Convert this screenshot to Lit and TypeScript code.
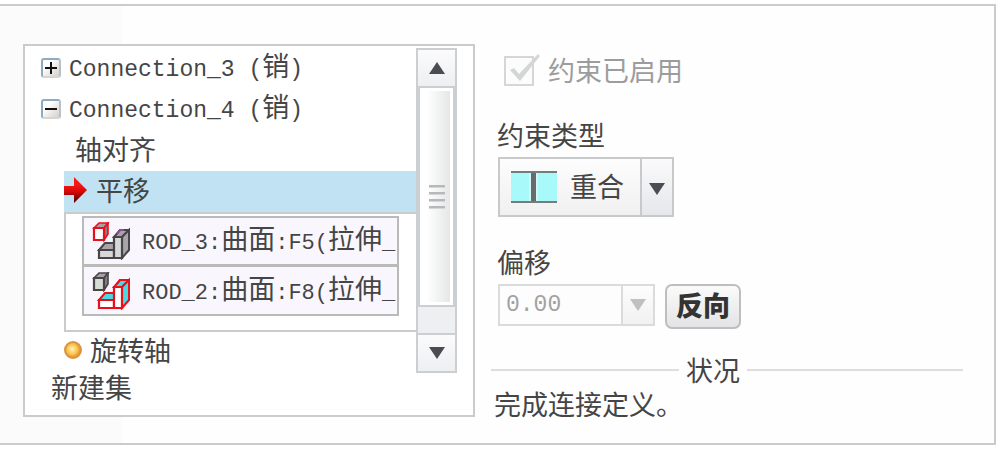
import { LitElement, html, css, svg } from "lit";
import { customElement, property, state } from "lit/decorators.js";

const textStyles = css`
  * {
    box-sizing: border-box;
  }
  .mono {
    font-family: "Liberation Mono", monospace;
    font-size: 23px;
    white-space: pre;
  }
`;

/** Sets Latin runs in the monospaced face and leaves Chinese in the UI face. */
const mixed = (text: string) =>
  text
    .split(/([\x20-\x7e]+)/)
    .filter((part) => part)
    .map((part) =>
      /^[\x20-\x7e]/.test(part) ? html`<span class="mono">${part}</span>` : part
    );

const partIcon = (active: "cube" | "step") => {
  const red = "#e8101c";
  const grey = "#484448";
  const cube = active === "cube" ? red : grey;
  const step = active === "step" ? red : grey;
  const cubeFace = active === "cube" ? "#fff" : "#d4dcd4";
  const stepFace = active === "step" ? "#fff" : "#d8d8d8";
  const stepSide = active === "step" ? "#4cd8e0" : "#a8a4a8";
  return html`<svg class="part" width="38" height="38" viewBox="0 0 38 38" aria-hidden="true">
    ${svg`
      <path d="M2 6 L7 1 H16 L12 6 Z" fill="#a8a0a4" stroke=${cube} stroke-width="1.6"/>
      <path d="M12 6 L16 1 V12 L12 18 Z" fill="#8c7c84" stroke=${cube} stroke-width="1.6"/>
      <path d="M2 6 H12 V18 H2 Z" fill=${cubeFace} stroke=${cube} stroke-width="2.2"/>
      <path d="M7 28 L13 21 H23 V28 Z" fill=${stepSide} stroke=${step} stroke-width="2"/>
      <path d="M22 15 L28 8 H37 L30 15 Z" fill=${stepSide} stroke=${step} stroke-width="2"/>
      <path d="M30 15 L37 8 V28 L30 36 Z" fill=${stepSide} stroke=${step} stroke-width="2"/>
      <path d="M7 28 H22 V36 H7 Z" fill=${stepFace} stroke=${step} stroke-width="2.2"/>
      <path d="M22 15 H30 V36 H22 Z" fill=${stepFace} stroke=${step} stroke-width="2.2"/>
      <path d="M25 12 L28 8 H32" fill="none" stroke=${active === "cube" ? "#8c4c9c" : red} stroke-width="2"/>
    `}
  </svg>`;
};

@customElement("tree-toggle")
export class TreeToggle extends LitElement {
  @property({ type: Boolean }) open = false;
  @property() label = "";

  static styles = css`
    :host {
      display: flex;
    }
    .toggle {
      display: flex;
      align-items: center;
      justify-content: center;
      width: 20px;
      height: 20px;
      padding: 0;
      border: 2px solid #b8c0c8;
      border-top-color: #8cacc4;
      border-left-color: #8cacc4;
      border-bottom-color: #d8d4d0;
      border-radius: 3px;
      background: linear-gradient(135deg, #ffffff 30%, #d4d0cc);
    }
  `;

  render() {
    return html`<button class="toggle" aria-label=${this.label} aria-expanded=${this.open}>
      <svg width="12" height="12" viewBox="0 0 12 12" aria-hidden="true">
        <path d=${this.open ? "M0 6H12" : "M0 6H12M6 0V12"} stroke="#111" stroke-width="2" />
      </svg>
    </button>`;
  }
}

@customElement("scroll-rail")
export class ScrollRail extends LitElement {
  static styles = css`
    * {
      box-sizing: border-box;
    }
    :host {
      display: flex;
      flex-direction: column;
      border: 2px solid #cccfd2;
      background: #eeeff1;
    }
    .step {
      display: flex;
      align-items: center;
      justify-content: center;
      height: 36px;
      padding: 0;
      border: 0;
      background: linear-gradient(#fbfbfc, #eeeff1);
    }
    .rail {
      flex: 1;
      display: flex;
      flex-direction: column;
      border-top: 2px solid #cccfd2;
      border-bottom: 2px solid #cccfd2;
      padding-bottom: 26px;
    }
    .thumb {
      flex: 1;
      display: flex;
      flex-direction: column;
      align-items: center;
      justify-content: center;
      gap: 4px;
      border: 2px solid #cccfd2;
      border-top: 0;
      box-shadow: inset 0 0 0 3px #fff;
      background: linear-gradient(90deg, #ffffff 20%, #e2e3e3);
    }
    .grip {
      width: 16px;
      height: 3px;
      border-bottom: 1px solid #d4d6d7;
      background: #b6b8b9;
    }
  `;

  render() {
    return html`
      <button class="step" aria-label="向上滚动">
        <svg width="18" height="12" viewBox="0 0 18 12"><path d="M9 0L17 12H1Z" fill="#4c4c50" /></svg>
      </button>
      <div class="rail">
        <div class="thumb">${[0, 1, 2, 3].map(() => html`<span class="grip"></span>`)}</div>
      </div>
      <button class="step" aria-label="向下滚动">
        <svg width="18" height="12" viewBox="0 0 18 12"><path d="M1 0H17L9 12Z" fill="#4c4c50" /></svg>
      </button>
    `;
  }
}

@customElement("connection-tree")
export class ConnectionTree extends LitElement {
  @state() private references = [
    { icon: "cube" as const, text: "ROD_3:曲面:F5(拉伸_" },
    { icon: "step" as const, text: "ROD_2:曲面:F8(拉伸_" },
  ];

  static styles = [
    textStyles,
    css`
      :host {
        display: grid;
        grid-template-columns: minmax(0, 1fr) 41px;
        padding: 2px 16px 9px 0;
        border: 2px solid #cbcbcb;
        background: #fff;
      }
      .tree,
      .set {
        margin: 0;
        padding: 0;
        list-style: none;
      }
      .row {
        display: flex;
        align-items: center;
        height: 41px;
        padding-bottom: 4px;
        white-space: nowrap;
      }
      .group {
        gap: 8px;
        padding-bottom: 2px;
        padding-left: 16px;
      }
      .child {
        padding-left: 50px;
      }
      .selected {
        gap: 8px;
        margin-left: 39px;
        background: #c1e2f2;
      }
      .short {
        height: 37px;
        padding-bottom: 2px;
      }
      .axis {
        gap: 8px;
        padding-left: 39px;
      }
      .new {
        padding-left: 26px;
      }
      .references {
        height: 120px;
        margin: 0 0 0 39px;
        padding: 2px 17px 0 16px;
        border: 2px solid #cbcbcb;
        border-right: 0;
        list-style: none;
      }
      .reference {
        display: flex;
        align-items: center;
        gap: 12px;
        height: 50px;
        padding-left: 8px;
        border: 2px solid #b9bbb9;
        background: #f9f7fd;
      }
      .reference + .reference {
        border-top-width: 1px;
      }
      .part {
        flex: none;
      }
      .name {
        white-space: nowrap;
      }
      .name .mono {
        font-size: 22px;
      }
      .rail {
        margin-bottom: 33px;
      }
    `,
  ];

  render() {
    return html`
      <ul class="tree">
        <li class="row group"><tree-toggle label="展开"></tree-toggle><span>${mixed("Connection_3 (销)")}</span></li>
        <li>
          <div class="row group"><tree-toggle open label="折叠"></tree-toggle><span>${mixed("Connection_4 (销)")}</span></div>
          <ul class="set">
            <li class="row child">轴对齐</li>
            <li>
              <div class="row selected">
                <svg width="24" height="28" viewBox="0 0 24 28" aria-hidden="true">
                  <defs>
                    <linearGradient id="arrow" x2="0" y2="1">
                      <stop offset="0.3" stop-color="#f41818" />
                      <stop offset="0.55" stop-color="#d80808" />
                      <stop offset="1" stop-color="#4c0000" />
                    </linearGradient>
                  </defs>
                  <path d="M0 10H10V1L23 14L10 27V19H0Z" fill="url(#arrow)" />
                </svg>
                <span>平移</span>
              </div>
              <ul class="references">
                ${this.references.map(
                  (item) => html`<li class="reference">${partIcon(item.icon)}<span class="name">${mixed(item.text)}</span></li>`
                )}
              </ul>
            </li>
            <li class="row short axis">
              <svg width="18" height="20" viewBox="0 0 18 20" aria-hidden="true">
                <defs>
                  <radialGradient id="dot" cx="0.45" cy="0.45">
                    <stop offset="0" stop-color="#fff4b8" />
                    <stop offset="0.6" stop-color="#fcc850" />
                    <stop offset="1" stop-color="#e89434" />
                  </radialGradient>
                </defs>
                <circle cx="9" cy="10" r="8" fill="url(#dot)" stroke="#dc9444" stroke-width="2" />
              </svg>
              <span>旋转轴</span>
            </li>
          </ul>
        </li>
        <li class="row short new">新建集</li>
      </ul>
      <scroll-rail class="rail"></scroll-rail>
    `;
  }
}

@customElement("constraint-form")
export class ConstraintForm extends LitElement {
  static styles = [
    textStyles,
    css`
      :host {
        display: flex;
        flex-direction: column;
      }
      .enabled {
        display: flex;
        align-items: center;
        gap: 8px;
        height: 40px;
        margin: 6px 0 0 13px;
        color: #9c9c9c;
      }
      .check {
        display: grid;
        width: 36px;
        height: 32px;
      }
      .check > * {
        grid-area: 1 / 1;
      }
      .box {
        appearance: none;
        width: 30px;
        height: 30px;
        margin: 2px 0 0;
        border: 2px solid #d5d7d5;
        background: #fcfcfc;
      }
      .tick,
      .glyph,
      .caret {
        pointer-events: none;
      }
      .caption {
        align-self: flex-start;
        height: 40px;
        margin: 26px 0 0 6px;
        line-height: 38px;
      }
      .type {
        display: grid;
        grid-template-columns: 142px 34px;
        align-items: center;
        width: 176px;
        height: 60px;
        margin: 1px 0 0 7px;
      }
      .type > * {
        grid-row: 1;
      }
      .select {
        grid-column: 1 / 3;
        appearance: none;
        width: 100%;
        height: 100%;
        padding: 0 0 3px 70px;
        border: 2px solid #c7c9cb;
        border-radius: 0;
        background:
          linear-gradient(#c7c9cb, #c7c9cb) 140px 0 / 2px 100% no-repeat,
          linear-gradient(#fafafb, #e6e7eb) 142px 0 / 40px 100% no-repeat,
          linear-gradient(#fdfdfd, #f0f0f1);
        color: inherit;
        font: inherit;
      }
      .glyph {
        grid-column: 1;
        margin-left: 13px;
      }
      .caret {
        grid-column: 2;
        justify-self: center;
      }
      .offset {
        display: flex;
        gap: 10px;
        margin: 1px 0 0 7px;
      }
      .combo {
        display: flex;
        width: 157px;
        height: 42px;
        border: 2px solid #dadbdc;
      }
      .value {
        flex: 1;
        min-width: 0;
        padding: 0 0 0 6px;
        border: 0;
        background: #fdfdfd;
        color: #a2a2a2;
      }
      .drop {
        display: flex;
        align-items: center;
        justify-content: center;
        width: 32px;
        padding: 0;
        border: 0;
        border-left: 2px solid #dadbdc;
        background: linear-gradient(#fdfdfd, #f1f1f2);
      }
      .flip {
        width: 76px;
        height: 45px;
        padding: 0 0 4px;
        border: 2px solid #bcbec0;
        border-radius: 7px;
        background: linear-gradient(#fbfbfb, #e4e4e6);
        color: #333;
        font: inherit;
        font-weight: 900;
        line-height: 36px;
      }
      .status {
        display: flex;
        align-items: center;
        gap: 7px;
        height: 34px;
        margin-top: 24px;
      }
      .status::before,
      .status::after {
        content: "";
        height: 2px;
        background: #dedede;
      }
      .status::before {
        flex: 188;
      }
      .status::after {
        flex: 216;
      }
      .title {
        margin: 0;
        font: inherit;
      }
      .message {
        margin: 0 0 0 3px;
        line-height: 34px;
      }
    `,
  ];

  render() {
    return html`
      <label class="enabled">
        <span class="check">
          <input class="box" type="checkbox" checked disabled />
          <svg class="tick" width="36" height="32" viewBox="0 0 36 32" aria-hidden="true">
            <path d="M6 16L10 14L15 20L34 0L36 2L16 27Z" fill="#d3d7d4" />
          </svg>
        </span>
        <span>约束已启用</span>
      </label>

      <label class="caption" for="type">约束类型</label>
      <div class="type">
        <select class="select" id="type">
          <option>重合</option>
        </select>
        <svg class="glyph" width="46" height="34" viewBox="0 0 46 34" aria-hidden="true">
          <path d="M0 2H46V32H0Z" fill="#a8fafa" />
          <path d="M20 2H25V32H20Z" fill="#646c6c" />
          <path d="M18 3H20V31H18ZM25 3H27V31H25Z" fill="#d8f4f4" />
          <path d="M0 2H46M0 32H46" stroke="#747c7c" stroke-width="2" />
        </svg>
        <svg class="caret" width="18" height="16" viewBox="0 0 18 16" aria-hidden="true">
          <path d="M1 4H17L9 16Z" fill="#4c4c54" />
        </svg>
      </div>

      <label class="caption" for="offset">偏移</label>
      <div class="offset">
        <div class="combo">
          <input class="value mono" id="offset" type="text" value="0.00" disabled />
          <button class="drop" aria-label="选择偏移" disabled>
            <svg width="18" height="12" viewBox="0 0 18 12"><path d="M1 0H17L9 12Z" fill="#c0c0c0" /></svg>
          </button>
        </div>
        <button class="flip">反向</button>
      </div>

      <div class="status"><h2 class="title">状况</h2></div>
      <p class="message">完成连接定义。</p>
    `;
  }
}

@customElement("app-root")
export class AppRoot extends LitElement {
  static styles = css`
    * {
      box-sizing: border-box;
    }
    :host {
      display: block;
      padding: 4px 7px 6px 0;
      background: #fff;
      color: #454545;
      font-family: "Noto Sans CJK SC", sans-serif;
      font-size: 27px;
      line-height: 36px;
    }
    .panel {
      display: grid;
      grid-template-columns: minmax(0, 452fr) minmax(0, 472fr);
      align-items: start;
      gap: 16px;
      padding: 38px 31px 22px 23px;
      border: 2px solid #cbcbcb;
      border-left: 0;
      background: linear-gradient(90deg, #fbfbfb 122px, #fefefe 122px);
    }
  `;

  render() {
    return html`<main class="panel">
      <connection-tree></connection-tree>
      <constraint-form></constraint-form>
    </main>`;
  }
}
